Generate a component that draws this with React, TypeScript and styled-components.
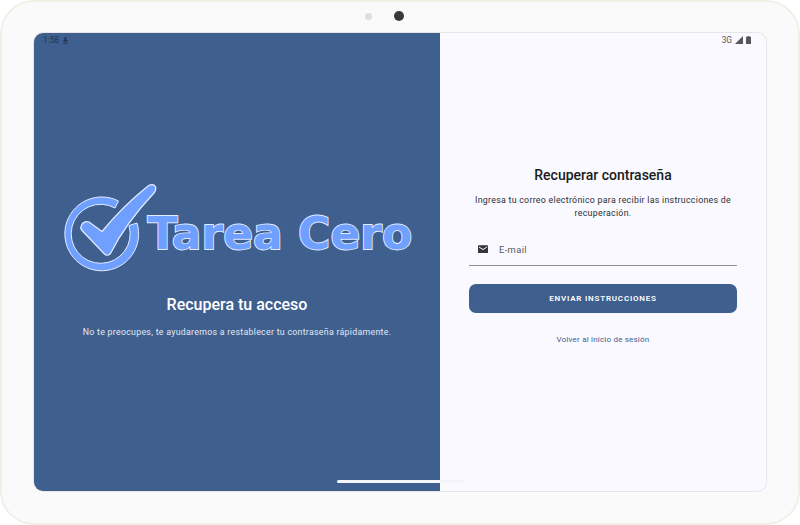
import React from "react";
import styled, { createGlobalStyle } from "styled-components";

const Global = createGlobalStyle`
  html, body { margin: 0; padding: 0; background: #ffffff; }
  body { font-family: Roboto, "Liberation Sans", sans-serif; }
  * { box-sizing: border-box; }
`;

const Device = styled.div`
  width: 800px;
  height: 525px;
  display: flex;
  flex-direction: column;
  padding: 0 33px 0 34px;
  background: #fafafa;
  border: 2px solid #f2efe7;
  border-radius: 34px;
  margin: 0;
`;

const TopBezel = styled.div`
  height: 31px;
  flex: none;
  display: flex;
  align-items: center;
  justify-content: center;
  gap: 22px;
  padding: 0 30px 3px 0;
  margin-left: -2px;
`;

const Sensor = styled.span`
  width: 7px;
  height: 7px;
  border-radius: 50%;
  background: #dedede;
`;

const Camera = styled.span`
  width: 10px;
  height: 10px;
  border-radius: 50%;
  background: #38393b;
`;

const Screen = styled.div`
  position: relative;
  flex: none;
  height: 458px;
  margin: 0 -1px 0 -2px;
  display: grid;
  grid-template-columns: 406px 327px;
  border-radius: 9px;
  overflow: hidden;
  box-shadow: 0 0 0 1px #e6e6e8;
`;

const StatusBar = styled.div`
  position: absolute;
  inset: 0 0 auto 0;
  height: 14px;
  padding: 0 15px 0 9px;
  display: flex;
  align-items: center;
  justify-content: space-between;
  font-size: 8.3px;
  color: #26354f;
`;

const StatusGroup = styled.div`
  display: flex;
  align-items: center;
  gap: 3px;
`;

const StatusTextRight = styled.span`
  color: #55575c;
`;

const HomeIndicator = styled.div`
  position: absolute;
  left: 303px;
  bottom: 8px;
  width: 126px;
  height: 3px;
  border-radius: 2px;
  background: linear-gradient(90deg, #f4f6fb 0 82%, #f3f3f8 100%);
`;

const LeftPanel = styled.section`
  background: #3f5f8f;
  display: flex;
  flex-direction: column;
  align-items: center;
  padding-top: 149px;
`;

const Logo = styled.div`
  width: 352px;
  height: 90px;
  display: flex;
  align-items: flex-end;
  margin-left: 3px;
`;

const LogoWord = styled.span`
  font-family: "DejaVu Sans", sans-serif;
  font-weight: 700;
  font-size: 44px;
  line-height: 44px;
  letter-spacing: 0;
  white-space: nowrap;
  color: #6f9fff;
  -webkit-text-stroke: 1.8px #e3edff;
  paint-order: stroke fill;
  margin-bottom: 16px;
`;

const LeftTitle = styled.h1`
  margin: 22px 0 0;
  font-size: 16px;
  line-height: 22px;
  font-weight: 500;
  color: #ffffff;
`;

const LeftText = styled.p`
  margin: 9px 0 0;
  font-size: 8.8px;
  line-height: 14px;
  letter-spacing: 0.28px;
  color: #e3e8f2;
`;

const RightPanel = styled.section`
  background: #f9f9ff;
  padding: 132px 30px 0 29px;
  display: flex;
  flex-direction: column;
  align-items: stretch;
`;

const Title = styled.h2`
  margin: 0;
  text-align: center;
  font-size: 14px;
  line-height: 20px;
  font-weight: 500;
  color: #191c20;
`;

const Instructions = styled.p`
  margin: 8.5px 0 0;
  text-align: center;
  font-size: 8.8px;
  line-height: 13px;
  letter-spacing: 0.28px;
  color: #2c2f35;
`;

const Field = styled.label`
  margin-top: 14px;
  height: 32px;
  display: flex;
  align-items: center;
  gap: 11px;
  padding: 0 8px 0 9px;
  border-bottom: 1px solid #8f9199;
`;

const FieldText = styled.span`
  font-size: 9.4px;
  letter-spacing: 0.35px;
  color: #55585f;
`;

const SubmitButton = styled.button`
  margin-top: 18.5px;
  height: 29px;
  border: none;
  border-radius: 7px;
  background: #3f5f8f;
  color: #ffffff;
  font-family: inherit;
  font-size: 8px;
  font-weight: 600;
  letter-spacing: 0.8px;
  text-transform: uppercase;
`;

const BackLink = styled.a`
  margin-top: 21px;
  text-align: center;
  font-size: 8px;
  line-height: 12px;
  font-weight: 400;
  letter-spacing: 0.2px;
  color: #3f5f8f;
`;

const DownloadIcon = () => (
  <svg width="7" height="7" viewBox="0 0 10 10" fill="#26354f">
    <path d="M3.5 0.5h3v4h2.5L5 8 1 4.5h2.5z" />
    <rect x="1.5" y="8.3" width="7" height="1.2" />
  </svg>
);

const SignalIcon = () => (
  <svg width="8" height="8" viewBox="0 0 8 8" fill="#55575c">
    <path d="M8 0v8H0z" />
  </svg>
);

const BatteryIcon = () => (
  <svg width="5" height="8" viewBox="0 0 5 8" fill="#55575c">
    <path d="M1.6 0h1.8v.8H5V8H0V.8h1.6z" />
  </svg>
);

const MailIcon = () => (
  <svg width="10" height="8.500" viewBox="0 0 11 9" fill="#33363b">
    <path d="M1 0h9a1 1 0 0 1 1 1v7a1 1 0 0 1-1 1H1a1 1 0 0 1-1-1V1a1 1 0 0 1 1-1zm0 1.6v1l4.5 2.6L10 2.600v-1L5.500 4.200z" fillRule="evenodd" />
  </svg>
);

const LogoMark = () => (
  <svg width="85" height="90" viewBox="0 0 85 90" style={{ flex: "none", overflow: "visible" }}>
    <path
      d="M55.5 19 A36.900 36.900 0 1 0 74 41 L66 43.500 A29.500 29.500 0 1 1 52 26 Z"
      fill="#6f9fff"
      stroke="#e3edff"
      strokeWidth="1"
      strokeLinejoin="round"
    />
    <path
      d="M18.500 43 Q21 38.500 26 40 L39 49.500 Q60 24 85 4 Q90 1 92.500 4.500 Q93.500 8 91 11 Q62 42 47.500 71.500 Q44 75 41 71.500 L18.500 48 Q17 45.500 18.500 43 Z"
      fill="#6f9fff"
      stroke="#e3edff"
      strokeWidth="1.200"
      strokeLinejoin="round"
    />
  </svg>
);

export default function App() {
  return (
    <>
      <Global />
      <Device>
        <TopBezel>
          <Sensor />
          <Camera />
        </TopBezel>
        <Screen>
          <LeftPanel>
            <Logo>
              <LogoMark />
              <LogoWord>Tarea Cero</LogoWord>
            </Logo>
            <LeftTitle>Recupera tu acceso</LeftTitle>
            <LeftText>No te preocupes, te ayudaremos a restablecer tu contraseña rápidamente.</LeftText>
          </LeftPanel>
          <RightPanel>
            <Title>Recuperar contraseña</Title>
            <Instructions>
              Ingresa tu correo electrónico para recibir las instrucciones de recuperación.
            </Instructions>
            <Field>
              <MailIcon />
              <FieldText>E-mail</FieldText>
            </Field>
            <SubmitButton>Enviar instrucciones</SubmitButton>
            <BackLink>Volver al inicio de sesión</BackLink>
          </RightPanel>
          <StatusBar>
            <StatusGroup>
              <span>1:58</span>
              <DownloadIcon />
            </StatusGroup>
            <StatusGroup>
              <StatusTextRight>3G</StatusTextRight>
              <SignalIcon />
              <BatteryIcon />
            </StatusGroup>
          </StatusBar>
          <HomeIndicator />
        </Screen>
      </Device>
    </>
  );
}
